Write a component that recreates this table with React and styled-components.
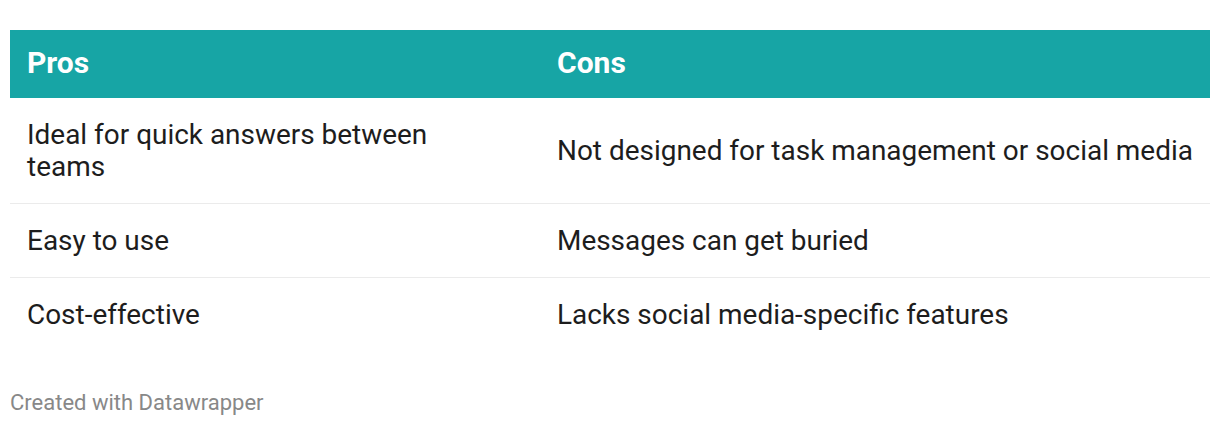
import React from "react";
import styled, { createGlobalStyle } from "styled-components";

const Global = createGlobalStyle`
  html, body { margin: 0; padding: 0; background: #fff; }
  body { font-family: Roboto, "Liberation Sans", Arial, sans-serif; }
`;

const Page = styled.div`
  padding: 30px 10px 0 10px;
`;

const Table = styled.div`
  display: grid;
  grid-template-columns: 530px 670px;
  width: 1200px;
`;

const HeadCell = styled.div`
  background: #17a5a5;
  color: #fff;
  font-weight: 700;
  font-size: 30px;
  height: 68px;
  display: flex;
  align-items: center;
  padding: 0 17px 4px 17px;
  box-sizing: border-box;
`;

const Cell = styled.div`
  display: flex;
  align-items: center;
  box-sizing: border-box;
  padding: 20px ${(p) => (p.$narrow ? "70px" : "10px")} 20px 17px;
  min-height: ${(p) => p.$h}px;
  font-size: 27.95px;
  line-height: 32px;
  color: #1d1d1d;
  border-top: ${(p) => (p.$first ? "none" : "1px solid #ebebeb")};
`;

const Footer = styled.div`
  margin-top: 40px;
  font-size: 22px;
  color: #888;
  line-height: 24px;
`;

const rows = [
  ["Ideal for quick answers between teams", "Not designed for task management or social media", 105],
  ["Easy to use", "Messages can get buried", 74],
  ["Cost-effective", "Lacks social media-specific features", 74],
];

export default function App() {
  return (
    <Page>
      <Global />
      <Table>
        <HeadCell>Pros</HeadCell>
        <HeadCell>Cons</HeadCell>
        {rows.map(([a, b, h], i) => (
          <React.Fragment key={i}>
            <Cell $first={i === 0} $h={h} $narrow>{a}</Cell>
            <Cell $first={i === 0} $h={h}>{b}</Cell>
          </React.Fragment>
        ))}
      </Table>
      <Footer>Created with Datawrapper</Footer>
    </Page>
  );
}
